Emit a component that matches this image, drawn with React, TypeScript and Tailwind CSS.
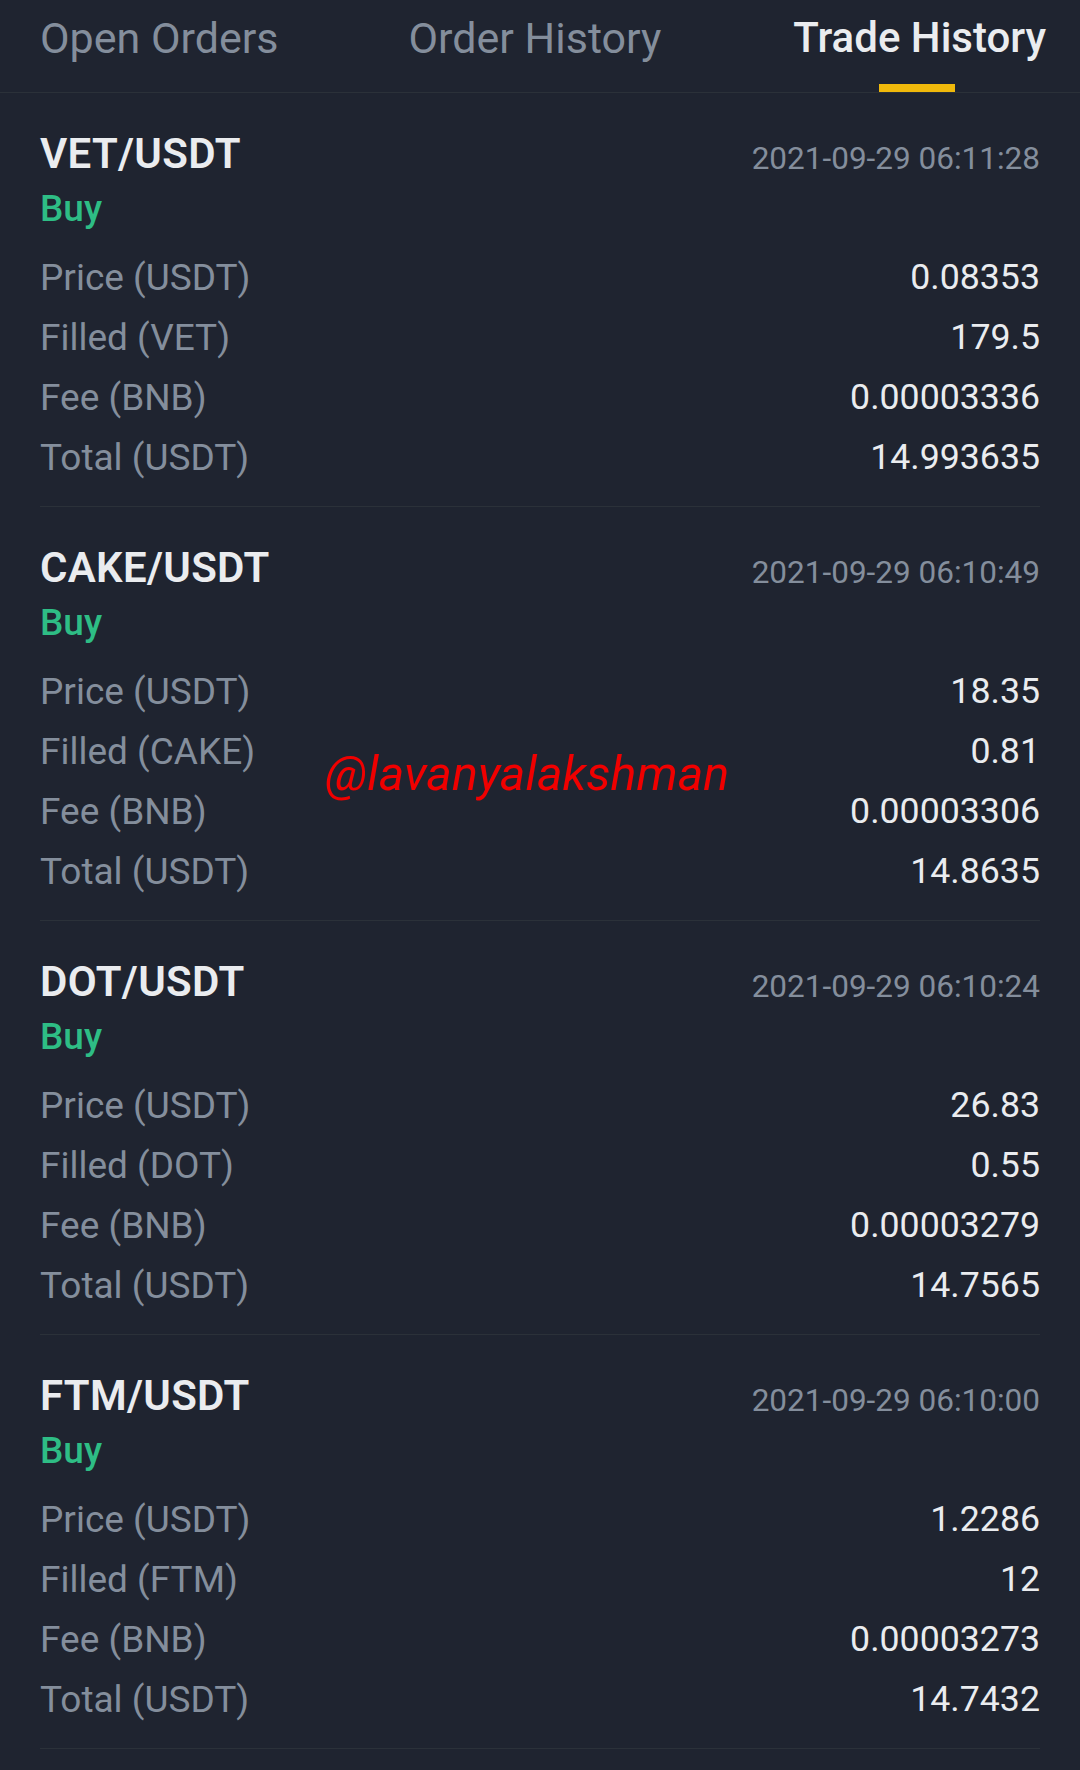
import React from "react";

type Trade = {
  pair: string;
  date: string;
  base: string;
  price: string;
  filled: string;
  fee: string;
  total: string;
};

const trades: Trade[] = [
  { pair: "VET/USDT", date: "2021-09-29 06:11:28", base: "VET", price: "0.08353", filled: "179.5", fee: "0.00003336", total: "14.993635" },
  { pair: "CAKE/USDT", date: "2021-09-29 06:10:49", base: "CAKE", price: "18.35", filled: "0.81", fee: "0.00003306", total: "14.8635" },
  { pair: "DOT/USDT", date: "2021-09-29 06:10:24", base: "DOT", price: "26.83", filled: "0.55", fee: "0.00003279", total: "14.7565" },
  { pair: "FTM/USDT", date: "2021-09-29 06:10:00", base: "FTM", price: "1.2286", filled: "12", fee: "0.00003273", total: "14.7432" },
];

function Row({ label, value }: { label: string; value: string }) {
  return (
    <div className="flex h-[60px] items-center justify-between">
      <span className="text-[37px] text-[#848e9c]">{label}</span>
      <span className="text-[35.7px] text-[#eaecef]">{value}</span>
    </div>
  );
}

function Card({ t }: { t: Trade }) {
  return (
    <div className="mx-[40px] h-[414px] border-b border-[#2b3139] pt-[36px]">
      <div className="flex h-[48px] items-center justify-between">
        <span className="text-[42px] font-semibold tracking-[0.3px] text-[#eaecef]">{t.pair}</span>
        <span className="mt-[12px] text-[31.5px] text-[#848e9c]">{t.date}</span>
      </div>
      <div className="mt-[8px] flex h-[48px] items-center text-[37px] font-medium text-[#2ebd85]">Buy</div>
      <div className="mt-[15px]">
        <Row label="Price (USDT)" value={t.price} />
        <Row label={`Filled (${t.base})`} value={t.filled} />
        <Row label="Fee (BNB)" value={t.fee} />
        <Row label="Total (USDT)" value={t.total} />
      </div>
    </div>
  );
}

export default function App() {
  return (
    <div
      className="relative min-h-[1770px] w-[1080px] bg-[#1f2430]"
      style={{ fontFamily: "Roboto, 'Liberation Sans', sans-serif" }}
    >
      <div className="flex h-[93px] items-start border-b border-[#2b3139] pl-[40px]">
        <span className="h-[76px] leading-[76px] text-[43px] text-[#848e9c]">Open Orders</span>
        <span className="ml-[130px] h-[76px] leading-[76px] text-[43px] text-[#848e9c]">Order History</span>
        <span className="relative ml-[132px] h-[92px] leading-[76px] text-[42px] font-medium text-[#eaecef]">
          Trade History
          <span className="absolute bottom-0 left-[86px] h-[8px] w-[76px] bg-[#f0b90b]" />
        </span>
      </div>
      {trades.map((t) => (
        <Card key={t.pair} t={t} />
      ))}
      <div className="pointer-events-none absolute left-[325px] top-[738px] text-[48.5px] italic text-[#f00000]">
        @lavanyalakshman
      </div>
    </div>
  );
}
